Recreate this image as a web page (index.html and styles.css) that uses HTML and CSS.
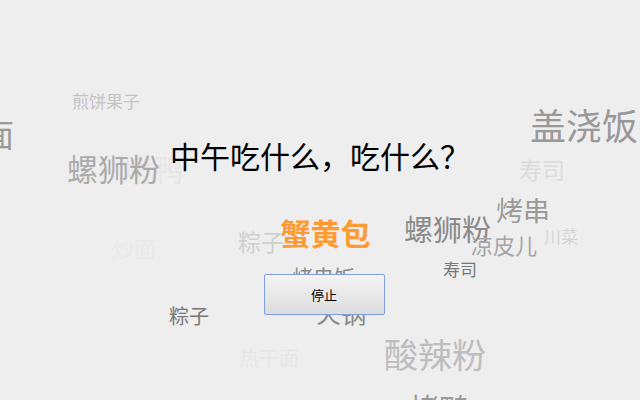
FILE: index.html
```html
<!DOCTYPE html>
<html lang="zh-CN">
<head>
<meta charset="utf-8">
<title>中午吃什么</title>
<link rel="stylesheet" href="styles.css">
</head>
<body>
<div class="stage">
  <div class="cloud">
    <span class="w" style="left:72px;top:92px;font-size:17px;color:#c3c3c3">煎饼果子</span>
    <span class="w" style="left:-82px;top:117px;font-size:32px;color:#999">热干面</span>
    <span class="w" style="left:121px;top:152px;font-size:31px;color:#e6e6e6">烤鸭</span>
    <span class="w" style="left:67px;top:152px;font-size:31px;color:#ababab">螺狮粉</span>
    <span class="w" style="left:530px;top:106px;font-size:36px;color:#999">盖浇饭</span>
    <span class="w" style="left:519px;top:158px;font-size:23px;color:#dcdcdc">寿司</span>
    <span class="w" style="left:496px;top:196px;font-size:27px;color:#9a9a9a">烤串</span>
    <span class="w" style="left:404px;top:214px;font-size:29px;color:#8a8a8a">螺狮粉</span>
    <span class="w" style="left:471px;top:233px;font-size:22px;color:#a5a5a5">凉皮儿</span>
    <span class="w" style="left:544px;top:227px;font-size:17px;color:#d5d5d5">川菜</span>
    <span class="w" style="left:443px;top:260px;font-size:17px;color:#777">寿司</span>
    <span class="w" style="left:238px;top:230px;font-size:23px;color:#cfcfcf">粽子</span>
    <span class="w" style="left:112px;top:236px;font-size:22px;color:#e9e9e9">炒面</span>
    <span class="w" style="left:292px;top:266px;font-size:21px;color:#8a8a8a">烤串饭</span>
    <span class="w" style="left:316px;top:300px;font-size:25px;color:#888">火锅</span>
    <span class="w" style="left:169px;top:306px;font-size:20px;color:#777">粽子</span>
    <span class="w" style="left:239px;top:348px;font-size:20px;color:#e6e6e6">热干面</span>
    <span class="w" style="left:384px;top:337px;font-size:34px;color:#bdbdbd">酸辣粉</span>
    <span class="w" style="left:409px;top:392px;font-size:30px;color:#999">烤鸭</span>
  </div>
  <main class="main">
    <h1 class="title">中午吃什么，吃什么？</h1>
    <div class="result">蟹黄包</div>
    <button class="btn" type="button">停止</button>
  </main>
</div>
</body>
</html>
```

FILE: styles.css
```css
html, body {
  margin: 0;
  padding: 0;
  overflow: hidden;
  background: #eeeeee;
}

body {
  font-family: "Noto Sans CJK SC", "Microsoft YaHei", sans-serif;
}

.stage {
  position: relative;
  width: 640px;
  height: 400px;
  overflow: hidden;
}

.cloud {
  position: absolute;
  inset: 0;
}

.w {
  position: absolute;
  line-height: 1;
  white-space: nowrap;
}

.main {
  position: relative;
  z-index: 1;
  display: flex;
  flex-direction: column;
  align-items: center;
  padding-top: 140px;
}

.title {
  margin: 0;
  font-size: 30px;
  line-height: 30px;
  font-weight: normal;
  color: #000;
}

.result {
  margin-top: 47px;
  margin-left: 11px;
  font-size: 30px;
  line-height: 30px;
  font-weight: bold;
  color: #ff9a33;
}

.btn {
  margin-top: 27px;
  margin-left: 8px;
  width: 121px;
  height: 41px;
  padding: 0;
  border: 1px solid #7f9fe0;
  border-radius: 2px;
  background: linear-gradient(#f4f4f4, #dcdcdc);
  font-family: "Noto Sans CJK SC", sans-serif;
  font-size: 13px;
  color: #000;
}
```
